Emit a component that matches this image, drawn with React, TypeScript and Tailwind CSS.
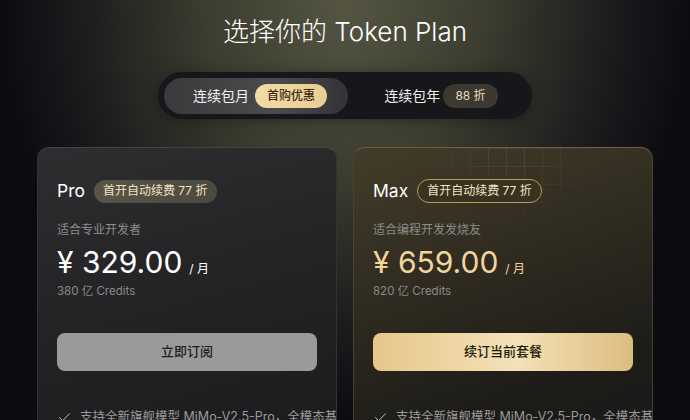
import { Check } from "lucide-react";

const font = "font-['Inter','Noto_Sans_CJK_SC',sans-serif]";

function Toggle() {
  return (
    <div className="mx-auto mt-[22px] flex h-[47px] w-[374px] items-center rounded-full bg-[#17171b] p-[6px] shadow-[0_2px_14px_rgba(0,0,0,0.35)]">
      <div className="flex h-[36px] w-[184px] items-center justify-center gap-[6px] rounded-full bg-[linear-gradient(90deg,#3a3a3c,#4b4b4c_60%,#343436)] pl-[8px]">
        <span className="text-[14px] text-[#f2f2f2]">连续包月</span>
        <span className="flex h-[24px] items-center rounded-full bg-[linear-gradient(90deg,#f3dba9,#e9cd93)] px-[12px] text-[12px] font-medium text-[#3b2c12]">
          首购优惠
        </span>
      </div>
      <div className="flex flex-1 items-center justify-center gap-[3px] pl-[8px]">
        <span className="text-[14px] text-[#eeeeee]">连续包年</span>
        <span className="flex h-[24px] items-center rounded-full bg-[#3c3931] px-[12px] text-[12px] text-[#eadbb9]">
          88 折
        </span>
      </div>
    </div>
  );
}

type Plan = {
  name: string;
  desc: string;
  price: string;
  credits: string;
  cta: string;
  gold: boolean;
};

function PlanCard({ plan }: { plan: Plan }) {
  const { gold } = plan;
  return (
    <div
      className={
        gold
          ? "relative h-[300px] overflow-hidden rounded-[12px] border border-[#4a4331] border-t-[#6b5f42] bg-[linear-gradient(160deg,#433c29_0%,#2f2b20_40%,#1d1c18_75%,#19191a_100%)] px-[19px] pt-[31px]"
          : "relative h-[300px] overflow-hidden rounded-[12px] border border-[#333335] border-t-[#444446] bg-[linear-gradient(165deg,#2e2e31_0%,#242427_45%,#1b1b1d_100%)] px-[19px] pt-[31px]"
      }
    >
      {gold && (
        <div className="pointer-events-none absolute left-[80px] top-0 h-[80px] w-[160px] bg-[linear-gradient(rgba(255,240,200,0.07)_1px,transparent_1px),linear-gradient(90deg,rgba(255,240,200,0.07)_1px,transparent_1px)] bg-[size:18px_18px] [mask-image:radial-gradient(ellipse_at_50%_0%,black_20%,transparent_75%)]" />
      )}
      <div className="relative flex h-[24px] items-center gap-[9px]">
        <span className="text-[17.5px] text-white">{plan.name}</span>
        <span
          className={
            gold
              ? "flex h-[24px] items-center rounded-full border border-[#b89a5c] bg-[#3a3221] px-[9px] text-[12px] text-[#f3e4c4]"
              : "flex h-[23px] items-center rounded-full bg-[linear-gradient(90deg,#5a5447,#4c4940)] px-[9px] text-[12px] text-[#f0e2c3]"
          }
        >
          首开自动续费 77 折
        </span>
      </div>
      <div className="relative mt-[18px] text-[12px] leading-[18px] text-[#8c8c8c]">{plan.desc}</div>
      <div className="relative mt-[5px] flex items-baseline">
        <span className={gold ? "text-[30px] leading-[36px] text-[#f2d59c]" : "text-[30px] leading-[36px] text-white"}>
          ¥ {plan.price}
        </span>
        <span className={gold ? "ml-[7px] text-[12px] text-[#f2d59c]" : "ml-[7px] text-[12px] text-white"}>/ 月</span>
      </div>
      <div className="relative mt-[2px] text-[11.5px] leading-[18px] text-[#8a8a8a]">{plan.credits}</div>
      <button
        className={
          gold
            ? "relative mt-[33px] flex h-[38px] w-full items-center justify-center rounded-[8px] bg-[linear-gradient(90deg,#e6c78b,#f4e1b8_55%,#dcbd80)] text-[13px] font-medium text-[#231b0d]"
            : "relative mt-[33px] flex h-[38px] w-full items-center justify-center rounded-[8px] bg-[#9a9a9b] text-[13px] font-medium text-[#1d1d1d]"
        }
      >
        {plan.cta}
      </button>
      <div className="relative mt-[36px] flex items-center gap-[8px] text-[12.5px] leading-[20px] text-[#9a9a9a]">
        <Check size={15} strokeWidth={1.6} className="shrink-0 text-[#c4c4c4]" />
        <span className="whitespace-nowrap">支持全新旗舰模型 MiMo-V2.5-Pro，全模态基座</span>
      </div>
    </div>
  );
}

const plans: Plan[] = [
  { name: "Pro", desc: "适合专业开发者", price: "329.00", credits: "380 亿 Credits", cta: "立即订阅", gold: false },
  { name: "Max", desc: "适合编程开发发烧友", price: "659.00", credits: "820 亿 Credits", cta: "续订当前套餐", gold: true },
];

export default function App() {
  return (
    <div
      className={`${font} h-[420px] w-[690px] overflow-hidden bg-[radial-gradient(ellipse_50%_100%_at_50%_0%,#555542_0%,#3d3d30_40%,#202020_72%,#0b0b12_100%)] pt-[14px]`}
    >
      <h1 className="text-center text-[26px] leading-[36px] font-light text-white">选择你的 Token Plan</h1>
      <Toggle />
      <div className="mx-auto mt-[28px] grid w-[616px] grid-cols-2 gap-[16px]">
        {plans.map((p) => (
          <PlanCard key={p.name} plan={p} />
        ))}
      </div>
    </div>
  );
}
